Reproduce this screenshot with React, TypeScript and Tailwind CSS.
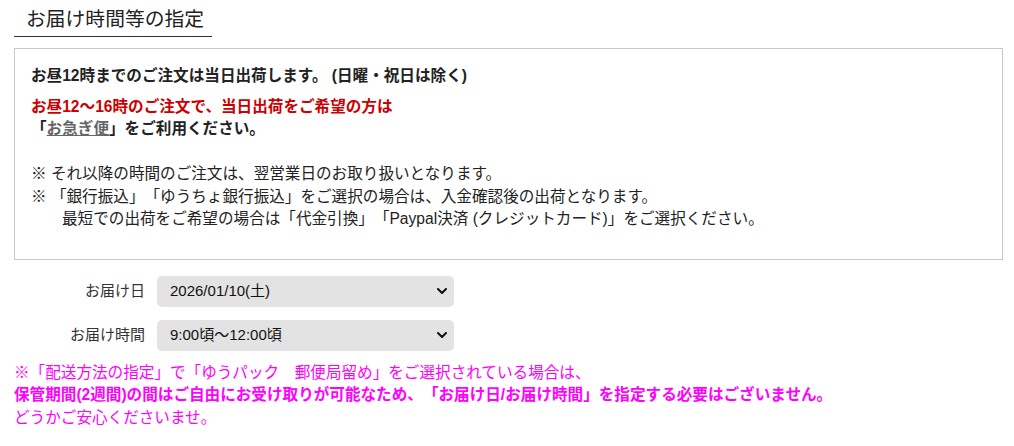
import React from "react";

const font = {
  fontFamily: '"Liberation Sans", "Noto Sans CJK JP", sans-serif',
};

function Chevron() {
  return (
    <svg
      viewBox="0 0 10 6"
      className="pointer-events-none absolute right-[7px] top-1/2 h-[6px] w-[10px] -translate-y-1/2"
      aria-hidden
    >
      <polyline
        points="1,1 5,5 9,1"
        fill="none"
        stroke="#111"
        strokeWidth="2"
        strokeLinecap="round"
        strokeLinejoin="round"
      />
    </svg>
  );
}

function SelectRow({
  label,
  options,
}: {
  label: string;
  options: string[];
}) {
  return (
    <div className="flex items-center">
      <label className="w-[143px] pr-3 text-right text-[15px] text-[#333]">
        {label}
      </label>
      <div className="relative w-[297px]">
        <select
          style={font}
          className="h-[31px] w-full appearance-none rounded-[5px] bg-[#e3e3e3] pl-[13px] pr-8 text-[15px] text-[#111] outline-none"
          defaultValue={options[0]}
        >
          {options.map((o) => (
            <option key={o}>{o}</option>
          ))}
        </select>
        <Chevron />
      </div>
    </div>
  );
}

export default function App() {
  return (
    <div
      style={font}
      className="bg-white pl-[14px] pr-[11px] text-[#222] [text-spacing-trim:space-all]"
    >
      <h2 className="inline-block border-b border-[#333] pb-[2px] pl-3 pr-2 pt-1 text-[19.8px] font-normal leading-[30px] text-[#222]">
        お届け時間等の指定
      </h2>

      <div className="mt-[11px] border border-[#c8c8c8] px-4 pb-7 pt-4 text-[15.6px] leading-[22.5px]">
        <p className="mb-2 font-bold">
          お昼12時までのご注文は当日出荷します。 (日曜・祝日は除く)
        </p>
        <p className="font-bold">
          <span className="text-[#cc0000]">
            お昼12～16時のご注文で、当日出荷をご希望の方は
          </span>
          <br />
          「
          <a href="#" className="text-[#666] underline">
            お急ぎ便
          </a>
          」をご利用ください。
        </p>
        <p className="mt-[22.5px]">
          ※ それ以降の時間のご注文は、翌営業日のお取り扱いとなります。
        </p>
        <p>
          ※ 「銀行振込」「ゆうちょ銀行振込」をご選択の場合は、入金確認後の出荷となります。
          <br />
          <span className="pl-[31px]">
            最短での出荷をご希望の場合は「代金引換」「Paypal決済 (クレジットカード)」をご選択ください。
          </span>
        </p>
      </div>

      <div className="mt-4 flex flex-col gap-[13px]">
        <SelectRow label="お届け日" options={["2026/01/10(土)"]} />
        <SelectRow label="お届け時間" options={["9:00頃～12:00頃"]} />
      </div>

      <div className="mt-[11px] text-[15.6px] leading-[22.5px] text-[#ff00ff]">
        <p>
          ※「配送方法の指定」で「ゆうパック　郵便局留め」をご選択されている場合は、
        </p>
        <p className="font-bold">
          保管期間(2週間)の間はご自由にお受け取りが可能なため、「お届け日/お届け時間」を指定する必要はございません。
        </p>
        <p>どうかご安心くださいませ。</p>
      </div>
    </div>
  );
}
